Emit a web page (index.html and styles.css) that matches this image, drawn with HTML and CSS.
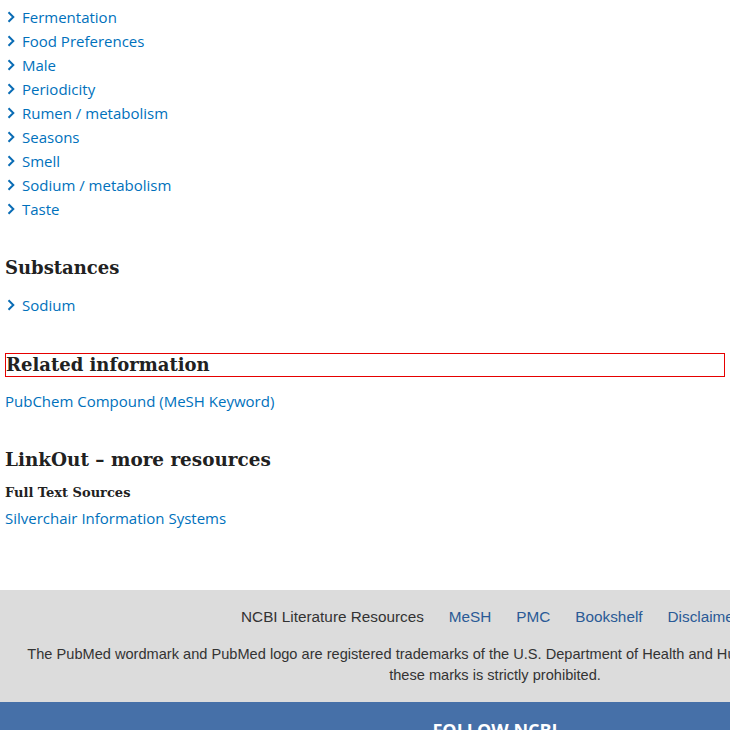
FILE: index.html
```html
<!DOCTYPE html>
<html lang="en">
<head>
<meta charset="utf-8">
<title>PubMed</title>
<link rel="stylesheet" href="styles.css">
</head>
<body>
<main class="content">
  <ul class="term-list">
    <li><svg class="chev" viewBox="0 0 8 12"><path d="M1.5 1.3 L6.3 6 L1.5 10.7"/></svg><a href="#">Fermentation</a></li>
    <li><svg class="chev" viewBox="0 0 8 12"><path d="M1.5 1.3 L6.3 6 L1.5 10.7"/></svg><a href="#">Food Preferences</a></li>
    <li><svg class="chev" viewBox="0 0 8 12"><path d="M1.5 1.3 L6.3 6 L1.5 10.7"/></svg><a href="#">Male</a></li>
    <li><svg class="chev" viewBox="0 0 8 12"><path d="M1.5 1.3 L6.3 6 L1.5 10.7"/></svg><a href="#">Periodicity</a></li>
    <li><svg class="chev" viewBox="0 0 8 12"><path d="M1.5 1.3 L6.3 6 L1.5 10.7"/></svg><a href="#">Rumen / metabolism</a></li>
    <li><svg class="chev" viewBox="0 0 8 12"><path d="M1.5 1.3 L6.3 6 L1.5 10.7"/></svg><a href="#">Seasons</a></li>
    <li><svg class="chev" viewBox="0 0 8 12"><path d="M1.5 1.3 L6.3 6 L1.5 10.7"/></svg><a href="#">Smell</a></li>
    <li><svg class="chev" viewBox="0 0 8 12"><path d="M1.5 1.3 L6.3 6 L1.5 10.7"/></svg><a href="#">Sodium / metabolism</a></li>
    <li><svg class="chev" viewBox="0 0 8 12"><path d="M1.5 1.3 L6.3 6 L1.5 10.7"/></svg><a href="#">Taste</a></li>
  </ul>

  <h2 class="section-title substances-title">Substances</h2>
  <ul class="term-list substances-list">
    <li><svg class="chev" viewBox="0 0 8 12"><path d="M1.5 1.3 L6.3 6 L1.5 10.7"/></svg><a href="#">Sodium</a></li>
  </ul>

  <h2 class="section-title related-title">Related information</h2>
  <div class="related-links"><a href="#">PubChem Compound (MeSH Keyword)</a></div>

  <h2 class="section-title linkout-title">LinkOut – more resources</h2>
  <h3 class="sub-title">Full Text Sources</h3>
  <div class="linkout-links"><a href="#">Silverchair Information Systems</a></div>
</main>

<footer class="footer">
  <div class="footer-gray">
    <nav class="footer-nav">
      <span class="nav-label">NCBI Literature Resources</span>
      <a href="#">MeSH</a>
      <a href="#">PMC</a>
      <a href="#">Bookshelf</a>
      <a href="#">Disclaimer</a>
    </nav>
    <p class="trademark">The PubMed wordmark and PubMed logo are registered trademarks of the U.S. Department of Health and Human Services. Unauthorized use of<br>these marks is strictly prohibited.</p>
  </div>
  <div class="footer-blue">
    <h3 class="follow">FOLLOW NCBI</h3>
  </div>
</footer>
</body>
</html>
```

FILE: styles.css
```css
html {
  overflow: hidden;
}
body {
  margin: 0;
  background: #ffffff;
  font-family: "Open Sans", "Noto Sans", sans-serif;
  color: #212121;
}
a {
  color: #0071bc;
  text-decoration: none;
}
.content {
  width: 720px;
  padding: 5px 5px 0 5px;
}
.term-list {
  list-style: none;
  margin: 0;
  padding: 0;
}
.term-list li {
  display: flex;
  align-items: center;
  height: 24px;
  font-size: 15px;
  line-height: 24px;
}
.chev {
  width: 8px;
  height: 12px;
  margin-left: 2px;
  margin-right: 7px;
  fill: none;
  stroke: #0a6cb5;
  stroke-width: 2;
}
.section-title {
  font-family: "DejaVu Serif", "Liberation Serif", serif;
  font-weight: bold;
  font-size: 18px;
  line-height: 30px;
  margin: 0;
  color: #212121;
}
.substances-title {
  margin-top: 32px;
}
.substances-list {
  margin-top: 10px;
}
.related-title {
  margin-top: 36px;
  line-height: 22px;
  border: 1px solid #e60000;
}
.related-links {
  margin-top: 12px;
  font-size: 15px;
  line-height: 24px;
}
.linkout-title {
  margin-top: 32px;
  font-size: 18.4px;
}
.sub-title {
  font-family: "DejaVu Serif", "Liberation Serif", serif;
  font-weight: bold;
  font-size: 13px;
  line-height: 20px;
  margin: 8px 0 0 0;
  color: #212121;
}
.linkout-links {
  margin-top: 3px;
  font-size: 15px;
  line-height: 24px;
}
.footer {
  margin-top: 60px;
  width: 990px;
}
.footer-gray {
  background: #dcdcdc;
  padding: 15px 0 16px 0;
  font-family: "Liberation Sans", Arial, sans-serif;
}
.footer-nav {
  display: flex;
  justify-content: center;
  gap: 25px;
  padding-right: 10px;
  font-size: 15.3px;
  line-height: 24px;
}
.nav-label {
  color: #333333;
}
.footer-nav a {
  color: #2a5a96;
}
.trademark {
  margin: 15px 0 0 0;
  padding: 0;
  text-align: center;
  font-size: 14.6px;
  line-height: 21px;
  color: #333333;
  white-space: nowrap;
}
.footer-blue {
  background: #4670a8;
  height: 60px;
  padding-top: 16px;
}
.follow {
  margin: 0;
  text-align: center;
  color: #ffffff;
  font-family: "Open Sans", sans-serif;
  font-weight: bold;
  font-size: 18px;
  line-height: 24px;
}
```
